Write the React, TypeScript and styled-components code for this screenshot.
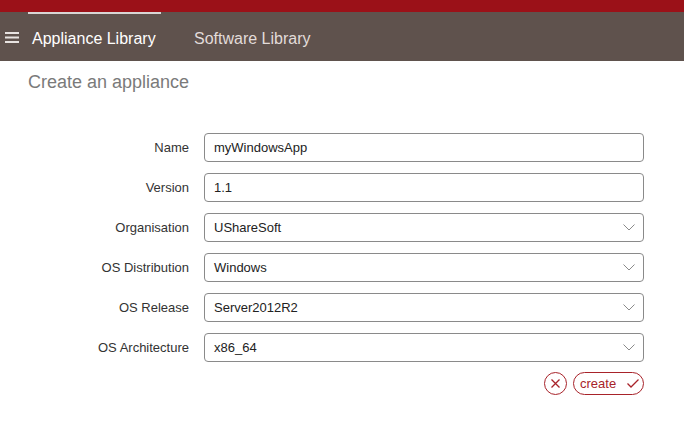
import React from "react";
import styled, { createGlobalStyle } from "styled-components";

const Global = createGlobalStyle`
  html, body { margin: 0; padding: 0; background: #fff; }
  body { font-family: "Liberation Sans", Arial, sans-serif; }
  * { box-sizing: border-box; }
`;

const Page = styled.div`
  width: 684px;
  height: 426px;
  overflow: hidden;
  display: flex;
  flex-direction: column;
`;

const TopStrip = styled.div`
  height: 12px;
  background: #9b1118;
`;

const NavBar = styled.nav`
  height: 49px;
  background: #5f524d;
  display: flex;
  align-items: stretch;
`;

const Burger = styled.div`
  width: 28px;
  display: flex;
  align-items: center;
  padding-left: 5px;
  padding-top: 2px;
`;

const Tab = styled.div<{ $active?: boolean }>`
  padding: 0 4px;
  margin-right: 29px;
  display: flex;
  align-items: center;
  padding-top: 2px;
  font-size: 16px;
  color: ${(p) => (p.$active ? "#ffffff" : "#e2dcda")};
  border-top: 2px solid ${(p) => (p.$active ? "#d9d6d5" : "transparent")};
  width: ${(p) => (p.$active ? "133px" : "auto")};
`;

const Title = styled.h1`
  margin: 10px 0 0 28px;
  font-weight: normal;
  font-size: 18px;
  color: #7a7a7a;
  line-height: 22px;
`;

const Form = styled.div`
  margin-top: 40px;
  display: grid;
  grid-template-columns: 189px 440px;
  column-gap: 15px;
  row-gap: 11px;
  align-items: center;
`;

const Label = styled.label`
  text-align: right;
  font-size: 13px;
  color: #333;
`;

const Field = styled.div`
  height: 29px;
  border: 1px solid #8a8a8a;
  border-radius: 4px;
  display: flex;
  align-items: center;
  justify-content: space-between;
  padding: 0 8px 0 9px;
  font-size: 13px;
  color: #222;
`;

const Actions = styled.div`
  grid-column: 2;
  display: flex;
  justify-content: flex-end;
  gap: 6px;
  margin-top: -1px;
`;

const CircleBtn = styled.div`
  width: 23px;
  height: 23px;
  border: 1px solid #a8232a;
  border-radius: 50%;
  display: flex;
  align-items: center;
  justify-content: center;
`;

const PillBtn = styled.div`
  height: 23px;
  width: 71px;
  border: 1px solid #a8232a;
  border-radius: 12px;
  display: flex;
  align-items: center;
  justify-content: space-between;
  padding: 0 4px 0 6px;
  color: #a8232a;
  font-size: 13px;
`;

const Chevron = () => (
  <svg width="12" height="7" viewBox="0 0 12 7">
    <polyline points="0.5,0.5 6,6 11.5,0.5" fill="none" stroke="#8a8a8a" strokeWidth="1" />
  </svg>
);

const rows: [string, string, boolean][] = [
  ["Name", "myWindowsApp", false],
  ["Version", "1.1", false],
  ["Organisation", "UShareSoft", true],
  ["OS Distribution", "Windows", true],
  ["OS Release", "Server2012R2", true],
  ["OS Architecture", "x86_64", true],
];

export default function App() {
  return (
    <Page>
      <Global />
      <TopStrip />
      <NavBar>
        <Burger>
          <svg width="14" height="11" viewBox="0 0 14 11">
            <rect x="0" y="0" width="14" height="2" fill="#e8e3e1" />
            <rect x="0" y="4.5" width="14" height="2" fill="#e8e3e1" />
            <rect x="0" y="9" width="14" height="2" fill="#e8e3e1" />
          </svg>
        </Burger>
        <Tab $active>Appliance Library</Tab>
        <Tab>Software Library</Tab>
      </NavBar>
      <Title>Create an appliance</Title>
      <Form>
        {rows.map(([l, v, sel]) => (
          <React.Fragment key={l}>
            <Label>{l}</Label>
            <Field>
              <span>{v}</span>
              {sel && <Chevron />}
            </Field>
          </React.Fragment>
        ))}
        <Actions>
          <CircleBtn>
            <svg width="9" height="9" viewBox="0 0 9 9">
              <path d="M0.5 0.5 L8.5 8.5 M8.5 0.5 L0.5 8.5" stroke="#a8232a" strokeWidth="1.3" />
            </svg>
          </CircleBtn>
          <PillBtn>
            <span>create</span>
            <svg width="12" height="9" viewBox="0 0 12 9">
              <polyline points="0.5,4.5 4,8 11.5,0.5" fill="none" stroke="#a8232a" strokeWidth="1.3" />
            </svg>
          </PillBtn>
        </Actions>
      </Form>
    </Page>
  );
}
